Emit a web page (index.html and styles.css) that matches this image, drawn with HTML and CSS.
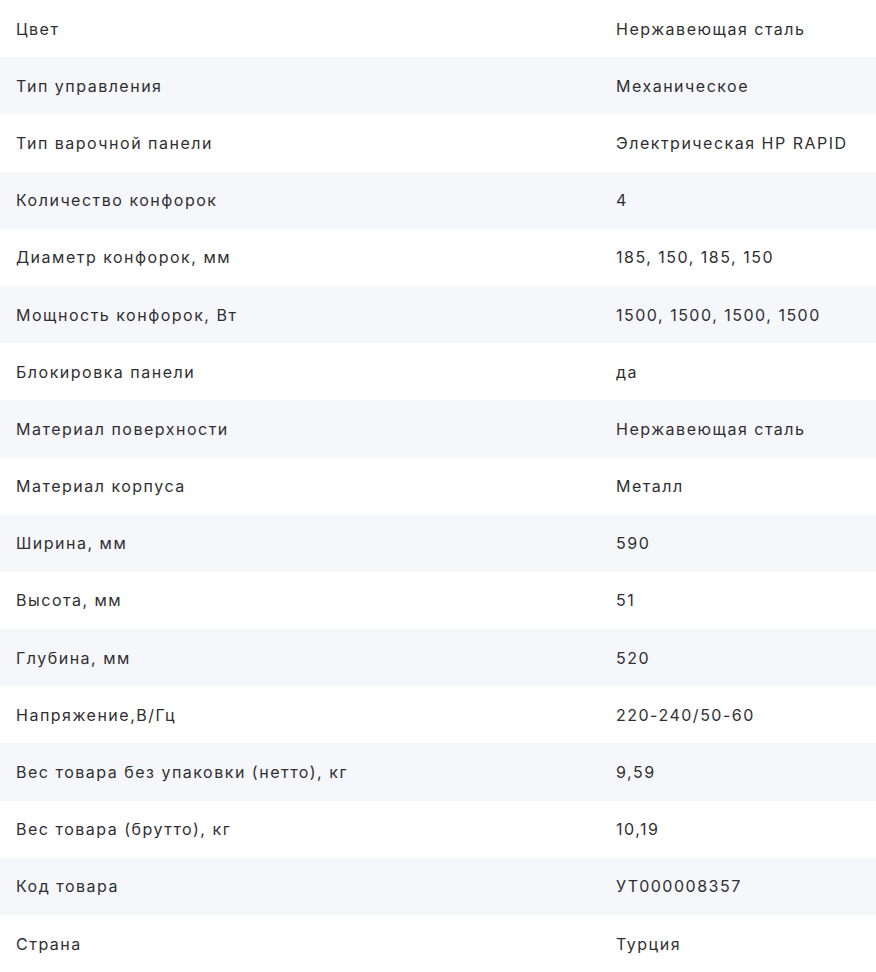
FILE: index.html
```html
<!DOCTYPE html>
<html lang="ru">
<head>
<meta charset="utf-8">
<link rel="stylesheet" href="styles.css">
</head>
<body>
<div class="specs">
  <div class="row"><div class="label">Цвет</div><div class="value">Нержавеющая сталь</div></div>
  <div class="row"><div class="label">Тип управления</div><div class="value">Механическое</div></div>
  <div class="row"><div class="label">Тип варочной панели</div><div class="value">Электрическая HP RAPID</div></div>
  <div class="row"><div class="label">Количество конфорок</div><div class="value">4</div></div>
  <div class="row"><div class="label">Диаметр конфорок, мм</div><div class="value">185, 150, 185, 150</div></div>
  <div class="row"><div class="label">Мощность конфорок, Вт</div><div class="value">1500, 1500, 1500, 1500</div></div>
  <div class="row"><div class="label">Блокировка панели</div><div class="value">да</div></div>
  <div class="row"><div class="label">Материал поверхности</div><div class="value">Нержавеющая сталь</div></div>
  <div class="row"><div class="label">Материал корпуса</div><div class="value">Металл</div></div>
  <div class="row"><div class="label">Ширина, мм</div><div class="value">590</div></div>
  <div class="row"><div class="label">Высота, мм</div><div class="value">51</div></div>
  <div class="row"><div class="label">Глубина, мм</div><div class="value">520</div></div>
  <div class="row"><div class="label">Напряжение,В/Гц</div><div class="value">220-240/50-60</div></div>
  <div class="row"><div class="label">Вес товара без упаковки (нетто), кг</div><div class="value">9,59</div></div>
  <div class="row"><div class="label">Вес товара (брутто), кг</div><div class="value">10,19</div></div>
  <div class="row"><div class="label">Код товара</div><div class="value">УТ000008357</div></div>
  <div class="row"><div class="label">Страна</div><div class="value">Турция</div></div>
</div>
</body>
</html>
```

FILE: styles.css
```css
html, body {
  margin: 0;
  padding: 0;
  background: #ffffff;
}
body {
  font-family: Inter, "Noto Sans", sans-serif;
  font-size: 16px;
  letter-spacing: 1.5px;
  color: #2f2f33;
}
.specs {
  display: flex;
  flex-direction: column;
}
.row {
  display: grid;
  grid-template-columns: 600px 1fr;
}
.row:nth-child(even) {
  background: #f6f7fb;
}
.label, .value {
  padding: 16.6px 16px;
  line-height: 24px;
  white-space: nowrap;
}
```
